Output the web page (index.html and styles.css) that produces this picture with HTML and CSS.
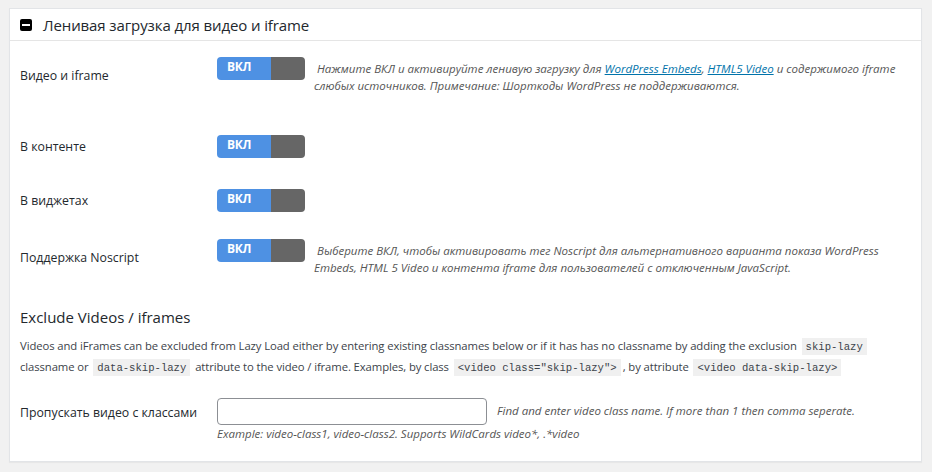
FILE: index.html
```html
<!DOCTYPE html>
<html lang="ru">
<head>
<meta charset="utf-8">
<title>Ленивая загрузка</title>
<link rel="stylesheet" href="styles.css">
</head>
<body>
<div class="panel">
  <div class="panel-head">
    <span class="collapse-icon"><span class="bar"></span></span>
    <h2 class="panel-title">Ленивая загрузка для видео и iframe</h2>
  </div>
  <div class="panel-body">
    <div class="row row-first">
      <div class="label">Видео и iframe</div>
      <div class="field">
        <span class="toggle"><span class="on">ВКЛ</span><span class="off"></span></span>
        <p class="desc">&nbsp;Нажмите ВКЛ и активируйте ленивую загрузку для <a href="#">WordPress Embeds</a>, <a href="#">HTML5 Video</a> и содержимого iframe слюбых источников. Примечание: Шорткоды WordPress не поддерживаются.</p>
      </div>
    </div>
    <div class="row row-second">
      <div class="label">В контенте</div>
      <div class="field">
        <span class="toggle"><span class="on">ВКЛ</span><span class="off"></span></span>
      </div>
    </div>
    <div class="row row-third">
      <div class="label">В виджетах</div>
      <div class="field">
        <span class="toggle"><span class="on">ВКЛ</span><span class="off"></span></span>
      </div>
    </div>
    <div class="row row-last">
      <div class="label">Поддержка Noscript</div>
      <div class="field">
        <span class="toggle"><span class="on">ВКЛ</span><span class="off"></span></span>
        <p class="desc">&nbsp;Выберите ВКЛ, чтобы активировать тег Noscript для альтернативного варианта показа WordPress Embeds, HTML 5 Video и контента iframe для пользователей с отключенным JavaScript.</p>
      </div>
    </div>

    <h3 class="section-title">Exclude Videos / iframes</h3>
    <p class="section-text">Videos and iFrames can be excluded from Lazy Load either by entering existing classnames below or if it has has no classname by adding the exclusion <code>skip-lazy</code> classname or <code>data-skip-lazy</code> attribute to the video / iframe. Examples, by class <code>&lt;video class="skip-lazy"&gt;</code>, by attribute <code>&lt;video data-skip-lazy&gt;</code></p>

    <div class="row row-input">
      <div class="label">Пропускать видео с классами</div>
      <div class="field field-input">
        <div class="input-line">
          <input class="text-input" type="text">
          <span class="desc inline-desc">Find and enter video class name. If more than 1 then comma seperate.</span>
        </div>
        <p class="desc help">Example: video-class1, video-class2. Supports WildCards video*, .*video</p>
      </div>
    </div>
  </div>
</div>
</body>
</html>
```
FILE: styles.css
```css
html, body {
  margin: 0;
  padding: 0;
}
body {
  background: #f1f1f1;
  font-family: "Open Sans", "Noto Sans", sans-serif;
  font-size: 13px;
  color: #23282d;
  padding: 8px 10px 10px 9px;
}
.panel {
  background: #fff;
  border: 1px solid #e2e4e7;
  box-shadow: 0 1px 1px rgba(0,0,0,.04);
  height: 454px;
  box-sizing: border-box;
}
.panel-head {
  display: flex;
  align-items: center;
  height: 31px;
  border-bottom: 1px solid #e5e5e5;
  padding-left: 10px;
}
.collapse-icon {
  width: 12px;
  height: 12px;
  background: #000;
  border-radius: 2px;
  display: flex;
  align-items: center;
  justify-content: center;
  margin-right: 11px;
}
.collapse-icon .bar {
  width: 8px;
  height: 2px;
  background: #fff;
}
.panel-title {
  margin: 0;
  font-size: 15px;
  font-weight: 400;
  color: #23282d;
  letter-spacing: -0.1px;
}
.panel-body {
  padding: 0 10px;
}
.row {
  display: grid;
  grid-template-columns: 197px 1fr;
  align-items: center;
}
.row-first { padding: 16px 0 41px; }
.row-second { padding: 0 0 31px; }
.row-third { padding: 0 0 27px; }
.row-last { padding: 0; }
.label {
  font-size: 12.3px;
  color: #23282d;
}
.field {
  display: flex;
  align-items: flex-start;
}
.toggle {
  display: flex;
  width: 88px;
  height: 23px;
  border-radius: 4px;
  overflow: hidden;
  flex: none;
}
.toggle .on {
  width: 54px;
  background: #4e91e3;
  color: #fff;
  font-family: "Open Sans", sans-serif;
  font-weight: 700;
  font-size: 12px;
  line-height: 20px;
  padding-left: 10px;
  box-sizing: border-box;
  letter-spacing: -0.3px;
}
.toggle .off {
  flex: 1;
  background: #666;
}
.desc {
  margin: 0;
  font-style: italic;
  font-size: 11.5px;
  line-height: 16.5px;
  color: #555;
}
.field .desc {
  margin-left: 9px;
  margin-top: 4px;
}
.desc a {
  color: #0073aa;
}
.section-title {
  margin: 30px 0 0;
  font-size: 15px;
  font-weight: 400;
  color: #23282d;
  line-height: 22px;
}
.section-text {
  margin: 8px 0 0;
  font-size: 11.3px;
  line-height: 19px;
  color: #3c434a;
  letter-spacing: -0.1px;
}
code {
  font-family: "Liberation Mono", "DejaVu Sans Mono", monospace;
  font-size: 10.6px;
  background: #f0f0f0;
  padding: 3px 4px 2px;
  margin: 0 2px;
  color: #3c434a;
  letter-spacing: 0;
}
.row-input {
  margin-top: 20px;
  align-items: start;
}
.row-input .label {
  padding-top: 6px;
}
.field-input {
  flex-direction: column;
}
.input-line {
  display: flex;
  align-items: center;
}
.text-input {
  width: 270px;
  height: 27px;
  box-sizing: border-box;
  border: 1px solid #8c8f94;
  border-radius: 4px;
  margin: 0;
  padding: 0 8px;
  background: #fff;
}
.field .inline-desc {
  margin: 0 0 0 10px;
}
.field .help {
  margin: 1px 0 0;
}
```
